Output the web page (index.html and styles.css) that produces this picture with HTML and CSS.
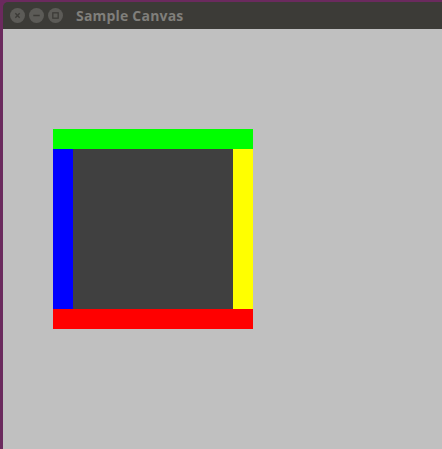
FILE: index.html
```html
<!DOCTYPE html>
<html>
<head>
<meta charset="utf-8">
<link rel="stylesheet" href="styles.css">
</head>
<body>
<div class="desktop">
  <div class="window">
    <div class="titlebar">
      <div class="buttons">
        <span class="btn"><svg width="15" height="15" viewBox="0 0 14 14"><path d="M5 5 L9 9 M9 5 L5 9" stroke="#3c3b37" stroke-width="1.3"/></svg></span>
        <span class="btn"><svg width="15" height="15" viewBox="0 0 14 14"><path d="M4 7 H10" stroke="#3c3b37" stroke-width="1.4"/></svg></span>
        <span class="btn"><svg width="15" height="15" viewBox="0 0 14 14"><rect x="4.5" y="4.5" width="5" height="5" fill="none" stroke="#3c3b37" stroke-width="1.2"/></svg></span>
      </div>
      <span class="title">Sample Canvas</span>
    </div>
    <div class="canvas">
      <div class="frame">
        <div class="top"></div>
        <div class="middle">
          <div class="left"></div>
          <div class="center"></div>
          <div class="right"></div>
        </div>
        <div class="bottom"></div>
      </div>
    </div>
  </div>
</div>
</body>
</html>
```
FILE: styles.css
```css
html, body { margin: 0; padding: 0; }
body { width: 442px; height: 449px; overflow: hidden; background: #6b2a5e; }
.desktop { padding: 2px 0 0 3px; height: 449px; box-sizing: border-box; }
.window { display: flex; flex-direction: column; height: 100%; }
.titlebar {
  height: 27px; background: #3c3b37; border-radius: 5px 0 0 0;
  display: flex; align-items: center; padding-left: 7px; box-sizing: border-box;
}
.buttons { display: flex; gap: 4px; }
.btn {
  width: 15px; height: 15px; border-radius: 50%; background: #5c5b57;
  display: block;
}
.btn svg { display: block; }
.title {
  margin-left: 13px; font-family: "Open Sans", "DejaVu Sans", sans-serif; font-weight: bold;
  font-size: 14px; color: #807f7b; letter-spacing: 0.2px;
}
.canvas { flex: 1; background: #c0c0c0; padding: 100px 0 0 50px; }
.frame { width: 200px; display: flex; flex-direction: column; }
.top { height: 20px; background: #00ff00; }
.bottom { height: 20px; background: #ff0000; }
.middle { height: 160px; display: flex; }
.left { width: 20px; background: #0000ff; }
.center { flex: 1; background: #404040; }
.right { width: 20px; background: #ffff00; }
```
